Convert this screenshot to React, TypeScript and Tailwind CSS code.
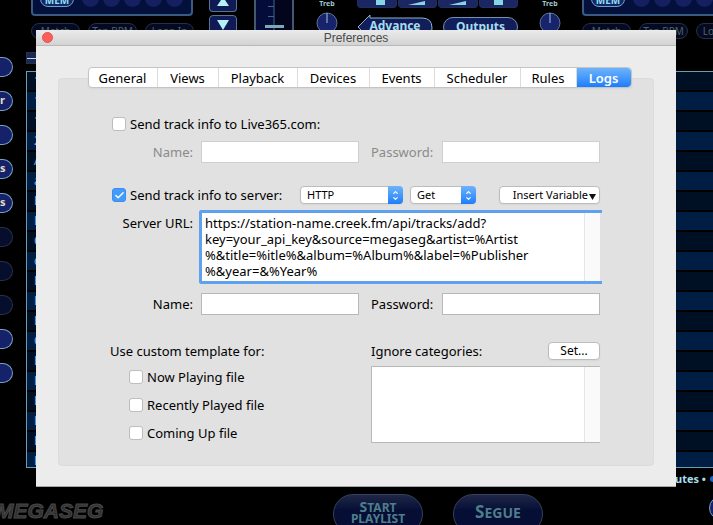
import React, {useState} from "react";
import {Check, ChevronDown, ChevronUp} from "lucide-react";

const tabs = [
    { label: "General", width: "w-[69px]" },
    { label: "Views", width: "w-[61px]" },
    { label: "Playback", width: "w-[79px]" },
    { label: "Devices", width: "w-[72px]" },
    { label: "Events", width: "w-[65px]" },
    { label: "Scheduler", width: "w-[86px]" },
    { label: "Rules", width: "w-[56px]" },
    { label: "Logs", width: "w-[54px]" },
]

const sideButtons = [
    { text: "", dim: false },
    { text: "r", dim: false },
    { text: "", dim: false },
    { text: "s", dim: false },
    { text: "s", dim: false },
    { text: "", dim: true },
    { text: "", dim: true },
    { text: "", dim: true },
    { text: "", dim: false },
    { text: "", dim: false },
]

const trackRows = ["1", "1", "1", "2", "A", "a", "L", "L", "C", "c", "L", "L", "L", "C", "L", "L", "L", "L", "L", "L"]

const serverUrl = `https://station-name.creek.fm/api/tracks/add?
key=your_api_key&source=megaseg&artist=%Artist
%&title=%itle%&album=%Album%&label=%Publisher
%&year=&%Year%`

function Deck() {
    return (
        <div className="w-[162px] shrink-0">
            <div className="flex h-4 items-end gap-1 rounded-b-sm border-2 border-t-0 border-[#3b5a80] bg-[#04103c] px-[7px] pb-[7px]">
                <div className="mr-1 flex h-5 w-[34px] shrink-0 items-end justify-center rounded-lg border border-[#6fa5c4] bg-[#15256b] text-[10px] leading-3 font-bold text-[#8fe0ee]">MEM</div>
                {[0, 1, 2, 3, 4].map((n) => (
                    <div key={n} className="h-[17px] w-[17px] shrink-0 rounded-full bg-[#14205f]" />
                ))}
            </div>
            <div className="mt-[7px] flex gap-2">
                {["Match", "Tap BPM", "Loop In"].map((name) => (
                    <button key={name} className="h-4 w-[49px] shrink-0 rounded-full border border-[#252f49] bg-[#050a22] text-[10px] leading-3 whitespace-nowrap text-[#4d6367]">{name}</button>
                ))}
            </div>
        </div>
    )
}

function Knob() {
    return (
        <div className="flex w-7 shrink-0 flex-col items-center text-[7px] leading-2 font-bold text-[#9fc9cf]">
            Treb
            <svg viewBox="0 0 22 22" className="mt-1 h-[22px] w-[22px]">
                <circle cx="11" cy="11" r="10" fill="#17246b" stroke="#5f7396" />
                <path d="M11 1v10" stroke="#9fc5dc" />
            </svg>
        </div>
    )
}

function TopBar() {
    return (
        <header className="flex h-[52px] shrink-0 overflow-hidden pl-[31px]">
            <Deck />
            <div className="ml-4 flex w-7 shrink-0 flex-col gap-[3px]">
                <button className="flex h-3 items-start justify-center rounded-b border border-t-0 border-[#55749a] bg-[#101b55]" aria-label="Up">
                    <svg viewBox="0 0 12 8" className="h-2 w-3"><path d="M6 -3l6 9H0z" fill="#b5f0f5" /></svg>
                </button>
                <button className="flex h-5 items-center justify-center rounded border border-[#55749a] bg-[#101b55]" aria-label="Down">
                    <svg viewBox="0 0 12 10" className="h-[10px] w-3"><path d="M0 0h12L6 10z" fill="#b5f0f5" /></svg>
                </button>
            </div>
            <svg viewBox="0 0 40 32" className="ml-[17px] h-8 w-10 shrink-0">
                <path d="M0 0h40v32H0z" fill="#03051c" />
                <path d="M1 0h19v32H1z" fill="#040d3a" />
                <path d="M1 0v32M39 0v32" stroke="#46586f" strokeWidth="2" />
                <path d="M20 0v32M14 6.500h6M14 16.500h6" stroke="#41648c" />
                <path d="M11 26.500h19" stroke="#7fa9b8" strokeWidth="3" />
            </svg>
            <div className="ml-[19px] flex shrink-0"><Knob /></div>
            <div className="ml-4 w-[161px] shrink-0">
                <div className="flex gap-px">
                    {["M8 5h9V0H8z", "M0 5h17V1z", "M0 5h17V1z", "M5 5h9V0H5z"].map((shape, i) => (
                        <div key={i} className="flex h-2 flex-1 justify-center rounded-b border border-t-0 border-[#222d5c] bg-[#1b2763]">
                            <svg viewBox="0 0 18 6" className="h-[6px] w-[18px]"><path d={shape} fill="#86d5e4" /></svg>
                        </div>
                    ))}
                </div>
                <div className="mt-[6px] flex gap-[10px]">
                    <button className="relative h-6 w-[76px] text-[12px] leading-6 font-bold text-[#a5ddeb]">
                        <svg viewBox="0 0 76 24" className="absolute inset-0 h-6 w-[76px]">
                            <path d="M1 13L13 1v3h52q10 0 10 10t-10 9H13v2z" fill="#121e5c" stroke="#8bb4cb" />
                        </svg>
                        <span className="relative">Advance</span>
                    </button>
                    <button className="mt-[3px] h-5 w-[75px] rounded-full border border-[#7293b4] bg-[#121e5c] text-[12px] leading-[18px] font-bold text-[#a5ddeb]">Outputs</button>
                </div>
            </div>
            <div className="ml-[18px] flex shrink-0"><Knob /></div>
            <div className="ml-[18px]"><Deck /></div>
        </header>
    )
}

function Player() {
    return (
        <div className="flex h-screen flex-col overflow-hidden bg-black">
            <TopBar />
            <main className="flex shrink-0">
                <div className="flex w-[26px] shrink-0 flex-col gap-[14px] pt-[5px]">
                    {sideButtons.map((button, idx) => (
                        <div
                            key={idx}
                            className={`h-5 w-[13px] rounded-r-full border border-l-0 text-[11px] leading-4 font-bold text-[#e8dcc0] ${button.dim ? "border-[#283144] bg-[#070d2d]" : "border-[#76a2c0] bg-[#15226a]"}`}
                        >
                            {button.text}
                        </div>
                    ))}
                </div>
                <div className="min-w-0 flex-1">
                    <div className="flex h-3 w-10 items-center border border-[#273052] bg-[#1d2750]">
                        <div className="h-px w-full bg-[#a5e5ed]" />
                    </div>
                    <div className="mt-[7px] h-[397px] overflow-hidden border border-r-0 border-[#6d9db0]">
                        {trackRows.map((letter, idx) => (
                            <div key={idx} className="h-5 border-b-2 border-black pl-[7px] text-[12px] leading-[18px] text-[#6bb8e8] odd:bg-[#001024] even:bg-[#001d43]">{letter}</div>
                        ))}
                    </div>
                    <div className="mt-[3px] flex items-center justify-end gap-1">
                        <p className="text-[11px] leading-4 font-bold text-[#a5dfec]">utes •</p>
                        <span className="h-[6px] w-[3px] rounded-l-full bg-[#1467c8]" />
                    </div>
                </div>
            </main>
            <footer className="mt-[7px] flex shrink-0 items-start">
                <svg viewBox="0 0 108 24" className="mt-[5px] h-6 w-[108px] shrink-0">
                    <text x="-4" y="19" fontSize="21" fontWeight="700" fontStyle="italic" fontFamily="Liberation Sans, sans-serif" fill="#303030" stroke="#484848" strokeWidth="1">MEGASEG</text>
                </svg>
                <button className="ml-[225px] h-10 w-[90px] shrink-0 rounded-full border border-[#34415b] bg-linear-to-b from-[#202747] to-[#060e35] to-40% pb-1 text-[#4d7e8a]">
                    <span className="block text-[12px] leading-[11px] font-bold"><span className="text-[14px]">S</span>TART</span>
                    <span className="block text-[12px] leading-[11px] font-bold">PLAYLIST</span>
                </button>
                <button className="ml-[30px] h-10 w-[90px] shrink-0 rounded-full border border-[#34415b] bg-linear-to-b from-[#202747] to-[#060e35] to-40% pb-1 text-[14px] font-bold text-[#4d7e8a]"><span className="text-[17px]">S</span>EGUE</button>
                <div className="mt-[2px] -mr-5 ml-auto h-6 w-6 shrink-0 rounded-full border border-[#76a2c0] bg-[#15226a]" />
            </footer>
        </div>
    )
}

interface CheckRowProps {
    label: string;
    checked?: boolean;
}

function CheckRow({ label, checked = false }: CheckRowProps) {
    const [on, setOn] = useState(checked)

    return (
        <label className="flex h-5 items-center gap-1 whitespace-nowrap">
            <span className="relative flex">
                <input
                    type="checkbox"
                    checked={on}
                    onChange={() => setOn(!on)}
                    className="h-[14px] w-[14px] appearance-none rounded-[3px] border border-[#bdbdbd] bg-white checked:border-[#3b8df5] checked:bg-[#459bfa]"
                />
                {on && <Check className="pointer-events-none absolute inset-0 m-auto h-[11px] w-[11px] text-white" strokeWidth={3} />}
            </span>
            {label}
        </label>
    )
}

function LoginRow({ id, disabled = false }: { id: string; disabled?: boolean }) {
    const field = `h-[22px] min-w-0 flex-1 border bg-white px-1 outline-none ${disabled ? "border-[#cfcfcf]" : "border-[#b8b8b8]"}`

    return (
        <div className={`flex items-center gap-2 ${disabled ? "text-[#8a8a8a]" : ""}`}>
            <label htmlFor={`${id}-name`} className="w-[83px] text-right">Name:</label>
            <input id={`${id}-name`} type="text" disabled={disabled} className={field} />
            <label htmlFor={`${id}-password`} className="ml-1 w-[63px] whitespace-nowrap">Password:</label>
            <input id={`${id}-password`} type="password" disabled={disabled} className={field} />
        </div>
    )
}

function Popup({ label, options, width }: { label: string; options: string[]; width: string }) {
    return (
        <div className={`relative h-[18px] ${width}`}>
            <select aria-label={label} className="h-[18px] w-full appearance-none rounded border border-[#bcbcbc] bg-white pl-[6px] text-[11px] leading-4 shadow-xs outline-none">
                {options.map((option) => <option key={option}>{option}</option>)}
            </select>
            <span className="pointer-events-none absolute inset-y-0 right-0 flex w-[15px] flex-col items-center justify-center rounded-r bg-linear-to-b from-[#6cb3fa] to-[#1a7dfb] text-white">
                <ChevronUp className="-mb-px h-[7px] w-[9px]" strokeWidth={4} />
                <ChevronDown className="h-[7px] w-[9px]" strokeWidth={4} />
            </span>
        </div>
    )
}

function Preferences() {
    const [active, setActive] = useState("Logs")

    return (
        <div role="dialog" aria-label="Preferences" className="absolute top-[30px] right-[37px] left-9 border-b border-[#a8a8a8] bg-[#ececec] pb-5 text-[13px] leading-4 text-black">
            <div className="flex h-4 items-center border-b border-[#b9b9b9] bg-linear-to-b from-[#ebebeb] to-[#d3d3d3] px-[6px]">
                <button aria-label="Close" className="h-[11px] w-[11px] rounded-full border border-[#e2534f] bg-[#fc5f5b]" />
                <h1 className="flex-1 pr-[11px] text-center font-['Liberation_Sans',sans-serif] text-[12px] leading-[14px] text-[#4a4a4a]">Preferences</h1>
            </div>

            {/* tab bar sits on the panel's top edge */}
            <div className="relative mt-[21px] -mb-[10px] flex justify-center pl-[7px]">
                <div role="tablist" className="flex h-[21px] divide-x divide-[#dcdcdc] rounded border border-[#c4c4c4] bg-white shadow-xs">
                    {tabs.map((tab) => (
                        <button
                            key={tab.label}
                            role="tab"
                            aria-selected={active === tab.label}
                            onClick={() => setActive(tab.label)}
                            className={`${tab.width} whitespace-nowrap last:rounded-r ${active === tab.label ? "bg-linear-to-b from-[#6cb3fa] to-[#1a7dfb] font-semibold text-white" : ""}`}
                        >
                            {tab.label}
                        </button>
                    ))}
                </div>
            </div>

            <div className="mx-[22px] rounded border border-[#dcdcdc] bg-[#e1e1e1] pt-[35px] pr-[53px] pb-[22px] pl-[51px]">
                <div className="pl-[2px]"><CheckRow label="Send track info to Live365.com:" /></div>
                <div className="mt-[7px]"><LoginRow id="live" disabled /></div>

                <div className="mt-[22px] flex h-5 items-center pl-[2px]">
                    <div className="w-[188px]"><CheckRow label="Send track info to server:" checked /></div>
                    <Popup label="Protocol" options={["HTTP", "FTP"]} width="w-[103px]" />
                    <div className="ml-[7px]"><Popup label="Method" options={["Get", "Post"]} width="w-[66px]" /></div>
                    <button className="ml-auto flex h-[18px] w-[101px] items-center justify-end rounded border border-[#bcbcbc] bg-white pr-[3px] text-[11px] whitespace-nowrap shadow-xs">
                        Insert Variable
                        <svg viewBox="0 0 7 6" className="mt-1 ml-px h-[6px] w-[7px]"><path d="M0 0h7L3.500 6z" fill="#111" /></svg>
                    </button>
                </div>

                <div className="mt-[5px] flex">
                    <label htmlFor="server-url" className="mt-[5px] mr-[6px] w-[83px] text-right whitespace-nowrap">Server URL:</label>
                    <div className="-mr-[2px] flex h-[74px] min-w-0 flex-1 rounded-l-[3px] border-y-3 border-l-3 border-[#5ea2ef]">
                        <textarea
                            id="server-url"
                            defaultValue={serverUrl}
                            spellCheck={false}
                            className="min-w-0 flex-1 resize-none overflow-hidden bg-white py-[2px] pl-[3px] leading-4 whitespace-pre outline-none"
                        />
                        <div className="mr-[2px] w-4 border-l border-[#e6e6e6] bg-[#fafafa]" />
                    </div>
                </div>

                <div className="mt-[9px]"><LoginRow id="server" /></div>

                <div className="mt-[27px] flex">
                    <fieldset className="flex-1">
                        <legend className="pt-[1px] whitespace-nowrap">Use custom template for:</legend>
                        <div className="mt-2 space-y-2 pl-[19px]">
                            <CheckRow label="Now Playing file" />
                            <CheckRow label="Recently Played file" />
                            <CheckRow label="Coming Up file" />
                        </div>
                    </fieldset>
                    <div className="w-[229px]">
                        <div className="flex items-center justify-between">
                            <span id="ignore-label">Ignore categories:</span>
                            <button className="h-[18px] w-[52px] rounded border border-[#bcbcbc] bg-white text-[12px] leading-[14px] shadow-xs">Set...</button>
                        </div>
                        <div role="listbox" aria-labelledby="ignore-label" className="mt-[6px] flex h-[77px] justify-end border border-r-0 border-[#b8b8b8] bg-white">
                            <div className="w-4 border-l border-[#e6e6e6] bg-[#fafafa]" />
                        </div>
                    </div>
                </div>
            </div>
        </div>
    )
}

export default function App() {
    return (
        <div className="relative overflow-hidden font-['Noto_Sans',sans-serif]">
            <Player />
            <Preferences />
        </div>
    )
}
